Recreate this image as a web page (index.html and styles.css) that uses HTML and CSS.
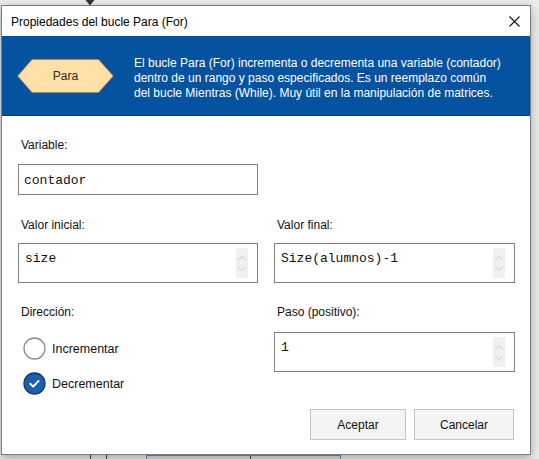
FILE: index.html
```html
<!DOCTYPE html>
<html lang="es">
<head>
<meta charset="utf-8">
<title>Propiedades del bucle Para (For)</title>
<link rel="stylesheet" href="styles.css">
</head>
<body>
<div class="backdrop">
  <svg class="bg-arrow" width="10" height="6" viewBox="0 0 10 6"><polygon points="0.5,0 9.5,0 5,5.5" fill="#333"/></svg>
  <div class="bg-line bg-line-a"></div>
  <div class="bg-line bg-line-b"></div>
  <div class="bg-rect"></div>
  <div class="bg-line bg-line-c"></div>
</div>

<div class="dialog">
  <div class="titlebar">
    <span class="title">Propiedades del bucle Para (For)</span>
    <svg class="close" width="11" height="11" viewBox="0 0 11 11"><path d="M0.5 0.5 L10.5 10.5 M10.5 0.5 L0.5 10.5" stroke="#111" stroke-width="1.1" fill="none"/></svg>
  </div>

  <div class="banner">
    <div class="hex">
      <svg width="97" height="34" viewBox="0 0 97 34"><polygon points="0.7,17 15,0.5 81.5,0.5 96.3,17 81.5,33.5 15,33.5" fill="#ffe0a8" stroke="#a8864e" stroke-width="1"/></svg>
      <span class="hex-label">Para</span>
    </div>
    <p class="desc">El bucle Para (For) incrementa o decrementa una variable (contador)<br>dentro de un rango y paso especificados. Es un reemplazo común<br>del bucle Mientras (While). Muy útil en la manipulación de matrices.</p>
  </div>

  <div class="content">
    <div class="field first">
      <div class="label">Variable:</div>
      <div class="input">contador</div>
    </div>

    <div class="row row-values">
      <div class="field">
        <div class="label">Valor inicial:</div>
        <div class="area">
          <span class="area-text">size</span>
          <span class="spin"><svg width="12" height="30" viewBox="0 0 12 30"><path d="M2.5 12 L6 8.5 L9.5 12" stroke="#c4c4c4" stroke-width="1" fill="none"/><path d="M2.5 19 L6 22.5 L9.5 19" stroke="#c4c4c4" stroke-width="1" fill="none"/></svg></span>
        </div>
      </div>
      <div class="field">
        <div class="label">Valor final:</div>
        <div class="area">
          <span class="area-text">Size(alumnos)-1</span>
          <span class="spin"><svg width="12" height="30" viewBox="0 0 12 30"><path d="M2.5 12 L6 8.5 L9.5 12" stroke="#c4c4c4" stroke-width="1" fill="none"/><path d="M2.5 19 L6 22.5 L9.5 19" stroke="#c4c4c4" stroke-width="1" fill="none"/></svg></span>
        </div>
      </div>
    </div>

    <div class="row row-dir">
      <div class="field">
        <div class="label">Dirección:</div>
        <div class="radios">
          <div class="radio">
            <svg width="23" height="23" viewBox="0 0 23 23"><circle cx="11.5" cy="11.5" r="10.5" fill="#fff" stroke="#8c8c8c" stroke-width="1.3"/></svg>
            <span>Incrementar</span>
          </div>
          <div class="radio">
            <svg width="23" height="23" viewBox="0 0 23 23"><circle cx="11.5" cy="11.5" r="10.5" fill="#1f5ea8" stroke="#0d3a72" stroke-width="1.3"/><path d="M7.3 11.8 L10.2 14.6 L15.6 8.9" stroke="#fff" stroke-width="1.9" fill="none" stroke-linecap="round" stroke-linejoin="round"/></svg>
            <span>Decrementar</span>
          </div>
        </div>
      </div>
      <div class="field">
        <div class="label">Paso (positivo):</div>
        <div class="area area-step">
          <span class="area-text">1</span>
          <span class="spin"><svg width="12" height="30" viewBox="0 0 12 30"><path d="M2.5 12 L6 8.5 L9.5 12" stroke="#c4c4c4" stroke-width="1" fill="none"/><path d="M2.5 19 L6 22.5 L9.5 19" stroke="#c4c4c4" stroke-width="1" fill="none"/></svg></span>
        </div>
      </div>
    </div>

    <div class="actions">
      <button class="btn btn-ok">Aceptar</button>
      <button class="btn btn-cancel">Cancelar</button>
    </div>
  </div>
</div>
</body>
</html>
```

FILE: styles.css
```css
html, body {
  margin: 0;
  padding: 0;
}
body {
  background: #ededed;
  width: 539px;
  height: 459px;
  overflow: hidden;
  position: relative;
  font-family: "Liberation Sans", Arial, sans-serif;
  color: #000;
}

/* free-canvas diagram behind the dialog */
.backdrop {
  position: absolute;
  inset: 0;
}
.bg-arrow {
  position: absolute;
  left: 85px;
  top: 0;
}
.bg-line {
  position: absolute;
  width: 1px;
  background: #4a4a4a;
  top: 455px;
  height: 4px;
}
.bg-line-a { left: 90px; }
.bg-line-b { left: 106px; }
.bg-line-c { left: 250px; top: 456px; }
.bg-rect {
  position: absolute;
  left: 146px;
  top: 454px;
  width: 193px;
  height: 10px;
  border-top: 2px solid #7890aa;
  border-left: 1px solid #7890aa;
  border-right: 1px solid #7890aa;
  background: #e2e2e2;
}

.dialog {
  position: relative;
  margin: 5px 0 0 1px;
  width: 530px;
  height: 450px;
  box-sizing: border-box;
  border: 1px solid #7d7d7d;
  background: #fff;
  box-shadow: 0 3px 10px rgba(0, 0, 0, 0.32);
  display: flex;
  flex-direction: column;
}

.titlebar {
  height: 30px;
  display: flex;
  align-items: center;
  justify-content: space-between;
  padding: 0 9px 0 9px;
  flex-shrink: 0;
}
.title {
  font-size: 12px;
  padding-top: 1px;
}
.close {
  display: block;
  margin-right: 1px;
}

.banner {
  height: 79px;
  border-bottom: 1px solid #0a3c78;
  background: #0552a1;
  display: flex;
  align-items: center;
  padding: 0 0 0 15px;
  gap: 20px;
  flex-shrink: 0;
}
.hex {
  position: relative;
  width: 97px;
  height: 34px;
  flex-shrink: 0;
}
.hex svg {
  display: block;
}
.hex-label {
  position: absolute;
  inset: 0;
  display: flex;
  align-items: center;
  justify-content: center;
  font-size: 12px;
  color: #3a2a18;
}
.desc {
  margin: 0;
  padding-top: 5px;
  color: #fff;
  font-size: 12px;
  line-height: 15px;
}

.content {
  padding: 0 15px 0 16px;
}
.label {
  font-size: 12px;
  line-height: 14px;
  color: #111;
  padding-left: 3px;
}
.first {
  margin-top: 22px;
  width: 240px;
}
.first .label {
  margin-bottom: 12px;
}
.input {
  height: 31px;
  box-sizing: border-box;
  border: 1px solid #808080;
  display: flex;
  align-items: center;
  padding: 2px 0 0 5px;
  font-family: "Liberation Mono", "Courier New", monospace;
  font-size: 13px;
  color: #111;
}

.row {
  display: grid;
  grid-template-columns: 240px 241px;
  column-gap: 16px;
}
.row-values {
  margin-top: 23px;
}
.row-values .label {
  margin-bottom: 11px;
}
.row-dir {
  margin-top: 22px;
}
.row-dir .label {
  margin-bottom: 13px;
}

.area {
  height: 40px;
  box-sizing: border-box;
  border: 1px solid #808080;
  display: flex;
  align-items: flex-start;
  justify-content: space-between;
  padding: 4px 9px 0 6px;
  font-family: "Liberation Mono", "Courier New", monospace;
  font-size: 13px;
  line-height: 16px;
  color: #111;
}
.area-step {
  height: 40px;
}
.area-text {
  padding-top: 3px;
}
.spin {
  display: block;
  width: 12px;
  height: 30px;
  background: #f0f0f0;
  margin-top: 0;
}
.spin svg {
  display: block;
}

.radios {
  display: flex;
  flex-direction: column;
  gap: 12px;
  padding-top: 5px;
  padding-left: 5px;
}
.radio {
  display: flex;
  align-items: center;
  gap: 6px;
  font-size: 12.5px;
  color: #111;
}
.radio svg {
  display: block;
}

.actions {
  margin-top: 14px;
  display: flex;
  justify-content: flex-end;
  gap: 8px;
  padding-right: 1px;
}
.btn {
  height: 31px;
  box-sizing: border-box;
  border: 1px solid #c4c4c4;
  background: #f4f4f4;
  font-family: "Liberation Sans", Arial, sans-serif;
  font-size: 12px;
  color: #111;
  padding: 0;
}
.btn-ok { width: 96px; }
.btn-cancel { width: 100px; }
```
